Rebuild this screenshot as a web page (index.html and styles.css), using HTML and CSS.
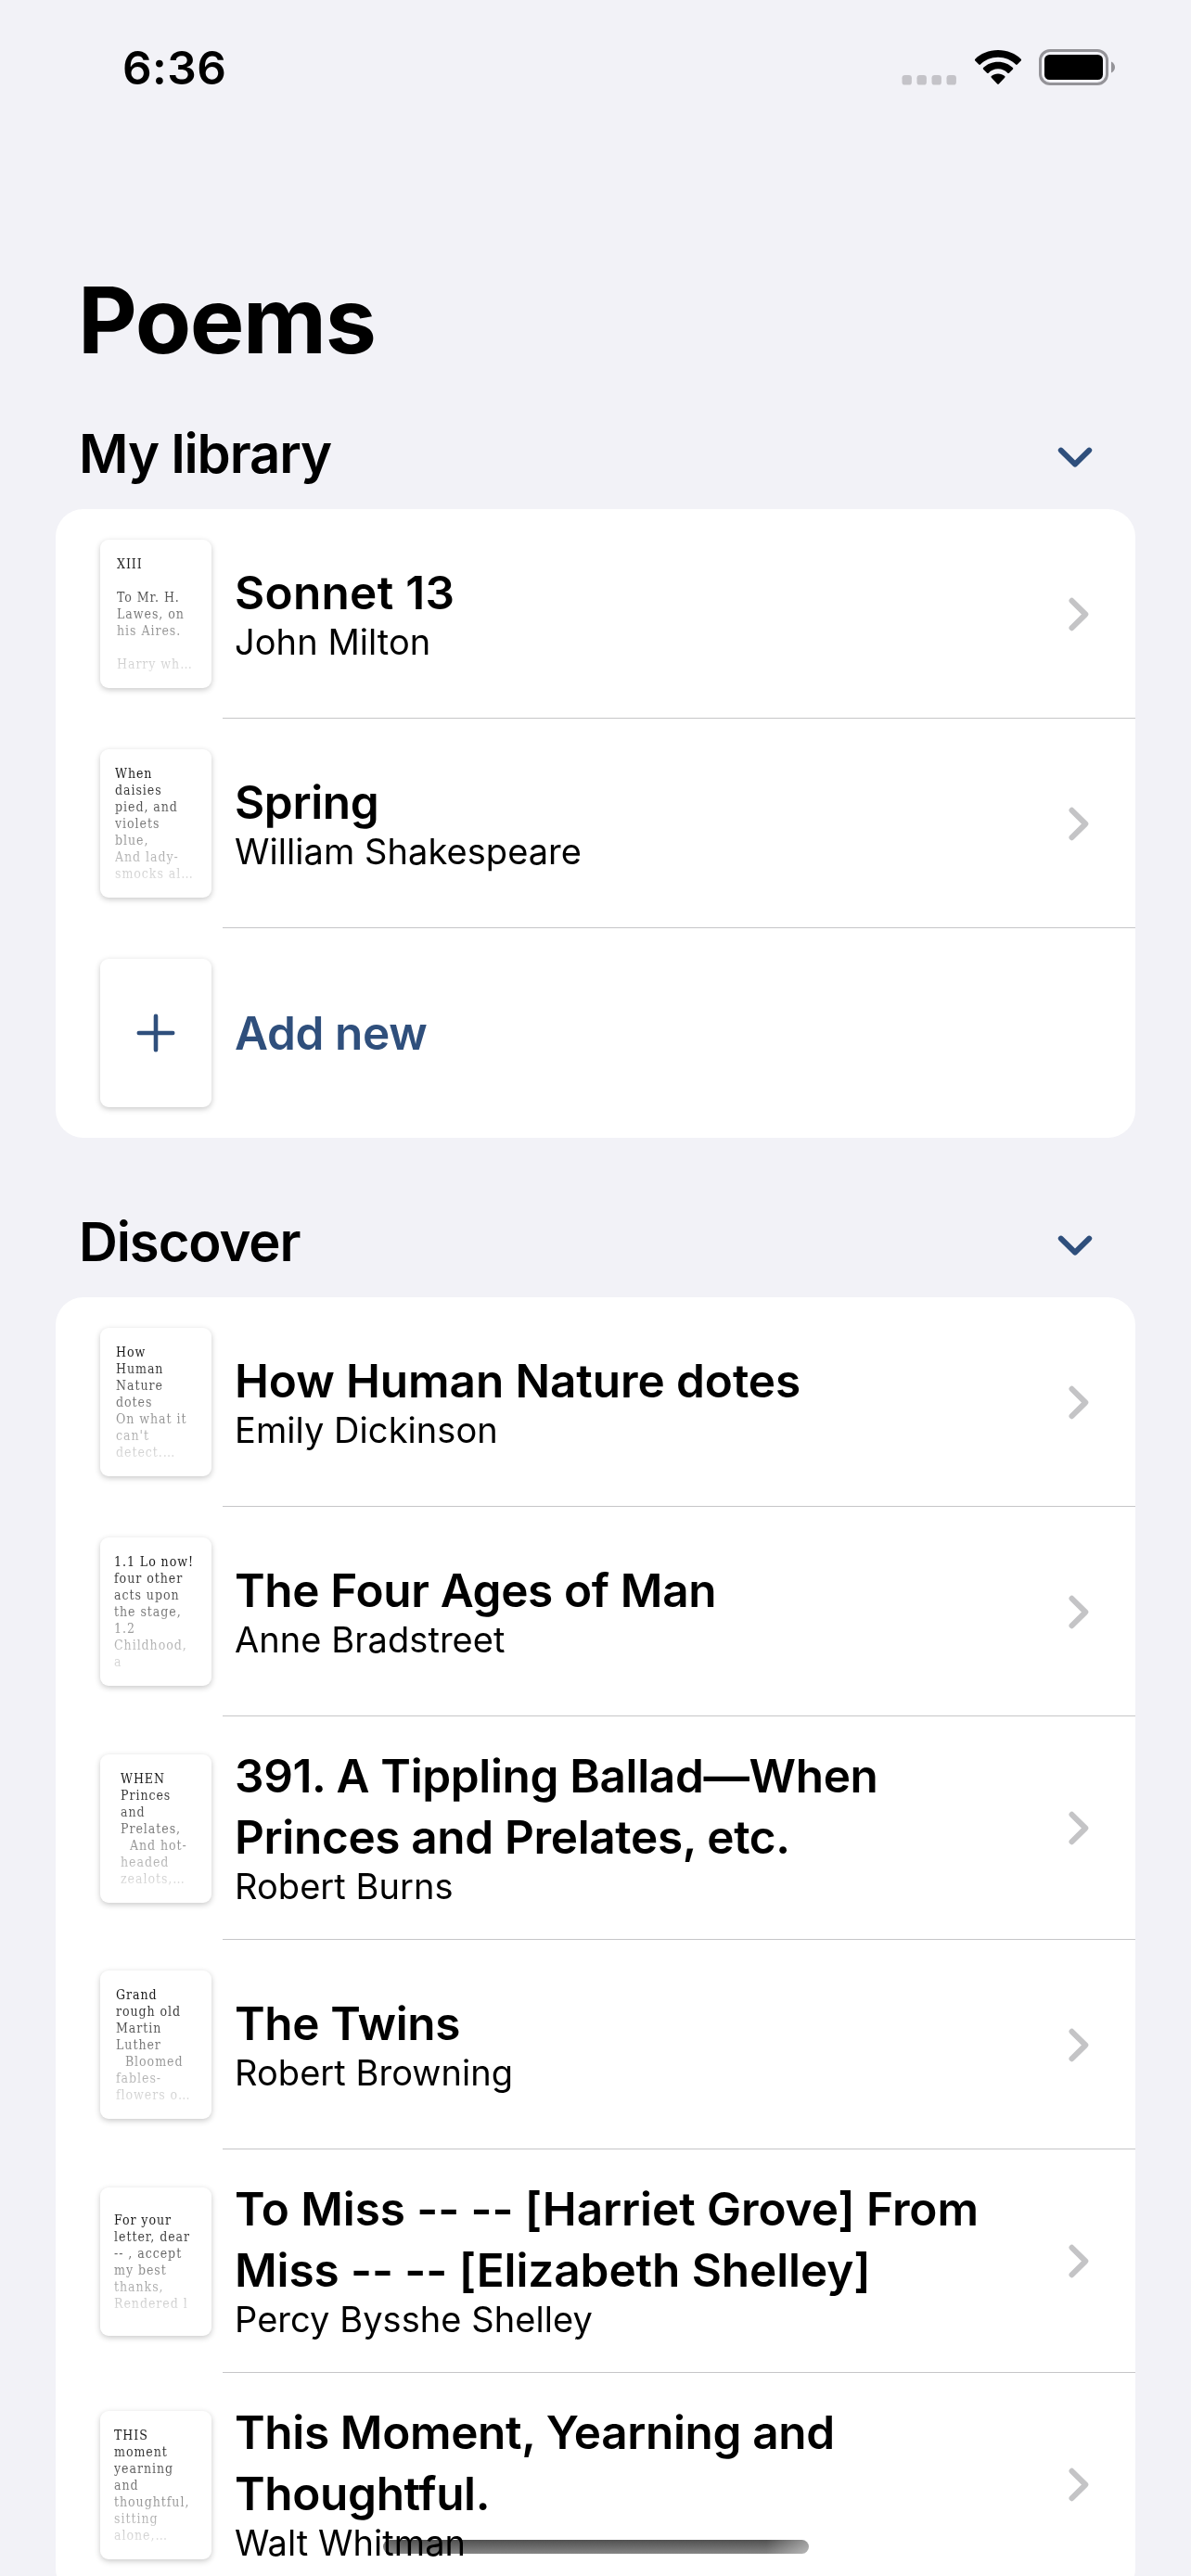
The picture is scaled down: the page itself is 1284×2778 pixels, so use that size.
FILE: index.html
```html
<!DOCTYPE html>
<html lang="en">
<head>
<meta charset="utf-8">
<title>Poems</title>
<link rel="stylesheet" href="styles.css">
</head>
<body>
<svg class="defs" width="0" height="0">
  <symbol id="next" viewBox="0 0 22 37"><path d="M3.5 3.8 18.3 18.5 3.5 33.2"/></symbol>
  <symbol id="down" viewBox="0 0 38 22"><path d="M3.8 3.6 19 18.6 34.2 3.6"/></symbol>
</svg>
<div class="screen">
  <header class="status">
    <span class="time">6:36</span>
    <div class="indicators">
      <svg class="cell" width="60" height="11" viewBox="0 0 60 11"><rect x="0.5" width="10.4" height="10.6" rx="3.2"/><rect x="16.5" width="10.4" height="10.6" rx="3.2"/><rect x="32.5" width="10.4" height="10.6" rx="3.2"/><rect x="48.5" width="10.4" height="10.6" rx="3.2"/></svg>
      <svg class="wifi" width="52" height="38" viewBox="0 0 52 38"><path d="M26 0C36 0 45 3.8 50.7 9.700c.5.5.5 1.200 0 1.700L46.700 15.500c-.5.5-1.100.5-1.600 0C40.100 10.500 33.700 7.700 26 7.700S11.900 10.500 6.900 15.500c-.5.5-1.100.5-1.600 0L1.300 11.400c-.5-.5-.5-1.200 0-1.700C7 3.800 16 0 26 0Z"/><path d="M26 12.700c6.300 0 11.800 2.400 15.900 6.300.5.5.5 1.200 0 1.700l-4 4c-.5.5-1.100.5-1.600 0C33.600 21.900 30.200 20.300 26 20.300s-7.600 1.600-10.300 4.400c-.5.5-1.100.5-1.600 0l-4-4c-.5-.5-.5-1.200 0-1.700C14.200 15.100 19.700 12.700 26 12.700Z"/><path d="M26 25.400c2.800 0 5.200 1 7.200 2.700.5.5.5 1.100 0 1.600l-6.400 6.900c-.5.5-1.100.5-1.600 0l-6.400-6.900c-.5-.5-.5-1.100 0-1.600 2-1.700 4.400-2.700 7.200-2.700Z"/></svg>
      <svg class="battery" width="83" height="40" viewBox="0 0 83 40"><rect class="shell" x="1.500" y="1.500" width="72" height="36" rx="10.500"/><rect x="6" y="6" width="63" height="27" rx="5.500"/><path class="nub" d="M78 13.500c2.500 1.100 4 3.300 4 6s-1.500 4.900-4 6Z"/></svg>
    </div>
  </header>
  <h1>Poems</h1>

  <section>
    <div class="head"><h2>My library</h2><svg class="down" width="38" height="22"><use href="#down"/></svg></div>
    <ul class="card">
      <li class="row"><div class="thumb t126"><p>XIII

To Mr. H.
Lawes, on
his Aires.

Harry wh…</p></div><div class="text"><h3 class="numeral">Sonnet 13</h3><span>John Milton</span></div><svg class="next" width="22" height="37"><use href="#next"/></svg></li>
      <li class="row"><div class="thumb t124"><p>When
daisies
pied, and
violets
blue,
And lady-
smocks al…</p></div><div class="text"><h3>Spring</h3><span>William Shakespeare</span></div><svg class="next" width="22" height="37"><use href="#next"/></svg></li>
      <li class="row add"><div class="thumb"><svg class="plus" width="42" height="42" viewBox="0 0 42 42"><path d="M21 2.800V39.200M2.800 21H39.200"/></svg></div><div class="text"><h3>Add new</h3></div></li>
    </ul>
  </section>

  <section>
    <div class="head"><h2>Discover</h2><svg class="down" width="38" height="22"><use href="#down"/></svg></div>
    <ul class="card">
      <li class="row"><div class="thumb t125"><p>How
Human
Nature
dotes
On what it
can't
detect.…</p></div><div class="text"><h3 class="loose">How Human Nature dotes</h3><span>Emily Dickinson</span></div><svg class="next" width="22" height="37"><use href="#next"/></svg></li>
      <li class="row"><div class="thumb t123"><p>1.1 Lo now!
four other
acts upon
the stage,
1.2
Childhood,
a</p></div><div class="text"><h3>The Four Ages of Man</h3><span>Anne Bradstreet</span></div><svg class="next" width="22" height="37"><use href="#next"/></svg></li>
      <li class="row tall"><div class="thumb t130"><p>WHEN
Princes
and
Prelates,
  And hot-
headed
zealots,…</p></div><div class="text"><h3>391. A Tippling Ballad—When<br>Princes and Prelates, etc.</h3><span>Robert Burns</span></div><svg class="next" width="22" height="37"><use href="#next"/></svg></li>
      <li class="row"><div class="thumb t125"><p>Grand
rough old
Martin
Luther
  Bloomed
fables-
flowers o…</p></div><div class="text"><h3>The Twins</h3><span>Robert Browning</span></div><svg class="next" width="22" height="37"><use href="#next"/></svg></li>
      <li class="row tall"><div class="thumb t123"><p>For your
letter, dear
-- , accept
my best
thanks,
Rendered l</p></div><div class="text"><h3 class="loose">To Miss -- -- [Harriet Grove] From<br>Miss -- -- [Elizabeth Shelley]</h3><span>Percy Bysshe Shelley</span></div><svg class="next" width="22" height="37"><use href="#next"/></svg></li>
      <li class="row tall"><div class="thumb t123"><p>THIS
moment
yearning
and
thoughtful,
sitting
alone,…</p></div><div class="text"><h3>This Moment, Yearning and<br>Thoughtful.</h3><span>Walt Whitman</span></div><svg class="next" width="22" height="37"><use href="#next"/></svg></li>
    </ul>
  </section>
  <div class="home"></div>
</div>
</body>
</html>
```
FILE: styles.css
```css
* { box-sizing: border-box; margin: 0; padding: 0; }
body { background: #f2f2f7; color: #000; font-family: Inter, "Liberation Sans", sans-serif; }
.defs { display: block; }
.screen { position: relative; width: 1284px; height: 2778px; overflow: hidden; }
.status { display: flex; justify-content: space-between; height: 280px; padding: 53px 81px 0 132px; }
.time { font-size: 49.5px; font-weight: 600; line-height: 40px; letter-spacing: 0.4px; }
.indicators { display: flex; align-items: flex-start; }
.cell { margin: 28px 18px 0 0; fill: #c4c3c8; }
.wifi { margin: 1px 18px 0 0; }
.shell { fill: none; stroke: #949398; stroke-width: 3; }
.nub { fill: #949398; }
h1 { height: 157px; padding-left: 84px; font-size: 98.6px; font-weight: 700; line-height: 130px; letter-spacing: -1.4px; }
.head { display: flex; justify-content: space-between; align-items: center; height: 112px; padding: 0 106px 0 85px; }
h2 { padding-bottom: 8px; font-size: 58px; font-weight: 600; line-height: 104px; letter-spacing: -1.1px; }
.down, .next, .plus { fill: none; stroke-linecap: round; stroke-linejoin: round; }
.down { stroke: #2f4f7c; stroke-width: 6; }
.card { width: 1164px; margin: 0 60px 60px; background: #fff; border-radius: 30px; list-style: none; }
.row { position: relative; display: flex; align-items: center; height: 226px; padding: 0 50px 0 48px; }
.row.tall { height: 241px; }
.row:not(:last-child)::after { content: ""; position: absolute; left: 180px; right: 0; bottom: 0; height: 1px; background: #c6c6c8; }
.thumb { display: flex; align-items: center; flex: none; width: 120px; height: 160px; border-radius: 9px; background: #fff; box-shadow: 0 2px 6px rgba(0,0,0,.22); }
.thumb p { font: 14px/18px "DejaVu Serif Condensed", "DejaVu Serif", serif; font-stretch: semi-condensed; letter-spacing: 0.95px; white-space: pre; background: linear-gradient(#1a1a1a 8%, #dedede 98%); -webkit-background-clip: text; background-clip: text; color: transparent; }
.t123 { padding-left: 15px; }
.t124 { padding-left: 16px; }
.t125 { padding-left: 17px; }
.t126 { padding-left: 18px; }
.t130 { padding-left: 22px; }
.text { flex: 1; padding: 0 0 5px 25px; white-space: nowrap; }
.tall .text { padding-bottom: 7px; }
h3 { font-size: 49.5px; font-weight: 600; line-height: 66px; letter-spacing: -0.35px; }
h3.loose { letter-spacing: -0.08px; }
h3.numeral { letter-spacing: 0.3px; }
.text span { display: block; font-size: 38px; line-height: 41px; letter-spacing: 0.06px; }
.next { stroke: #c4c4c6; stroke-width: 6; }
.add .thumb { justify-content: center; }
.add h3 { color: #2f4f7c; }
.add .text { padding-bottom: 0; }
.plus { stroke: #2f4f7c; stroke-width: 4.6; }
.home { position: absolute; left: 413px; top: 2739px; width: 459px; height: 15px; border-radius: 7.5px; background: linear-gradient(90deg, rgba(255,255,255,.12), transparent 5%, transparent 90%, rgba(255,255,255,.42)), linear-gradient(#505050, #858585); mix-blend-mode: multiply; }
```
